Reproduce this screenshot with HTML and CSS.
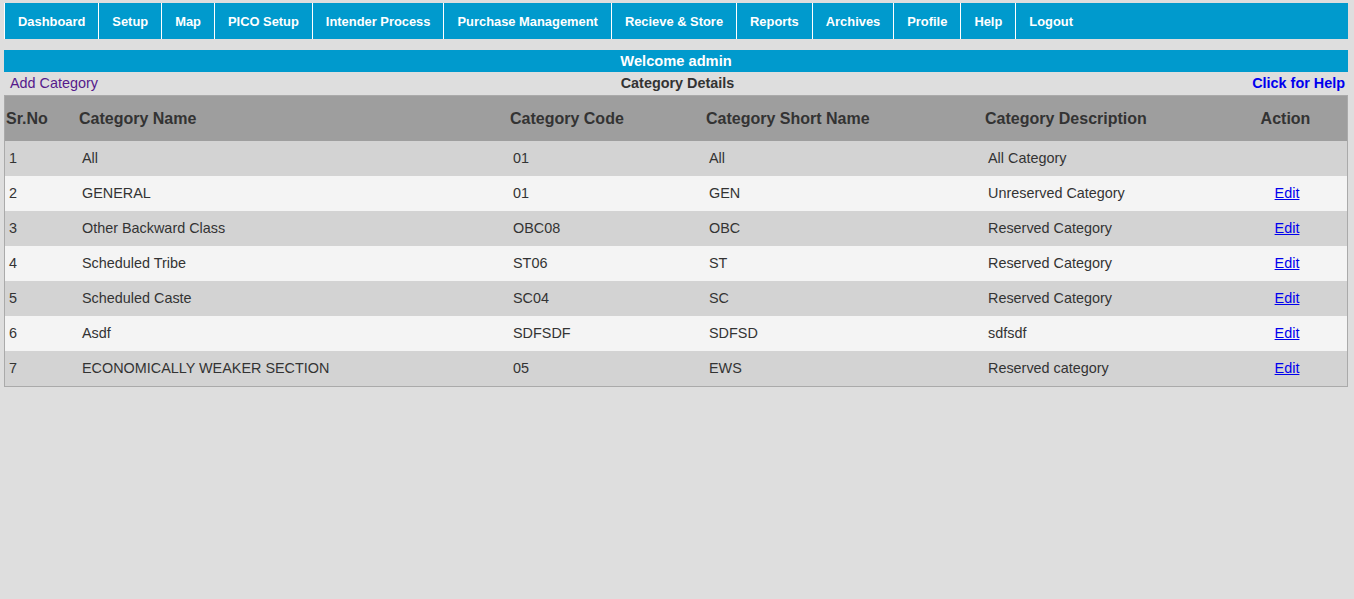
FILE: index.html
```html
<!DOCTYPE html>
<html>
<head>
<meta charset="utf-8">
<link rel="stylesheet" href="styles.css">
</head>
<body>
<div class="page">
  <nav class="menu">
    <a class="menu-item">Dashboard</a>
    <a class="menu-item">Setup</a>
    <a class="menu-item">Map</a>
    <a class="menu-item">PICO Setup</a>
    <a class="menu-item">Intender Process</a>
    <a class="menu-item">Purchase Management</a>
    <a class="menu-item">Recieve &amp; Store</a>
    <a class="menu-item">Reports</a>
    <a class="menu-item">Archives</a>
    <a class="menu-item">Profile</a>
    <a class="menu-item">Help</a>
    <a class="menu-item">Logout</a>
  </nav>
  <div class="welcome">Welcome admin</div>
  <div class="toolbar">
    <a class="add-link" href="#">Add Category</a>
    <span class="title">Category Details</span>
    <a class="help-link" href="#">Click for Help</a>
  </div>
  <table class="grid">
    <colgroup>
      <col class="c1"><col class="c2"><col class="c3"><col class="c4"><col class="c5"><col class="c6">
    </colgroup>
    <thead>
      <tr>
        <th>Sr.No</th>
        <th>Category Name</th>
        <th>Category Code</th>
        <th>Category Short Name</th>
        <th>Category Description</th>
        <th class="center">Action</th>
      </tr>
    </thead>
    <tbody>
      <tr><td>1</td><td>All</td><td>01</td><td>All</td><td>All Category</td><td class="center"></td></tr>
      <tr><td>2</td><td>GENERAL</td><td>01</td><td>GEN</td><td>Unreserved Category</td><td class="center"><a href="#" class="edit">Edit</a></td></tr>
      <tr><td>3</td><td>Other Backward Class</td><td>OBC08</td><td>OBC</td><td>Reserved Category</td><td class="center"><a href="#" class="edit">Edit</a></td></tr>
      <tr><td>4</td><td>Scheduled Tribe</td><td>ST06</td><td>ST</td><td>Reserved Category</td><td class="center"><a href="#" class="edit">Edit</a></td></tr>
      <tr><td>5</td><td>Scheduled Caste</td><td>SC04</td><td>SC</td><td>Reserved Category</td><td class="center"><a href="#" class="edit">Edit</a></td></tr>
      <tr><td>6</td><td>Asdf</td><td>SDFSDF</td><td>SDFSD</td><td>sdfsdf</td><td class="center"><a href="#" class="edit">Edit</a></td></tr>
      <tr><td>7</td><td>ECONOMICALLY WEAKER SECTION</td><td>05</td><td>EWS</td><td>Reserved category</td><td class="center"><a href="#" class="edit">Edit</a></td></tr>
    </tbody>
  </table>
</div>
</body>
</html>
```
FILE: styles.css
```css
html, body {
  margin: 0;
  padding: 0;
  background: #dedede;
  font-family: "Liberation Sans", Arial, sans-serif;
}
.page {
  padding: 3px 6px 0 4px;
}
.menu {
  display: flex;
  height: 36px;
  background: #009acd;
  border-left: 1px solid #fff;
}
.menu-item {
  display: flex;
  align-items: center;
  padding: 0 13px;
  border-right: 1px solid #fff;
  color: #fff;
  font-weight: bold;
  font-size: 12.9px;
  text-decoration: none;
}
.menu-item:last-child {
  border-right: none;
}
.welcome {
  margin-top: 11px;
  height: 22px;
  line-height: 22px;
  background: #009acd;
  color: #fff;
  font-weight: bold;
  font-size: 14.67px;
  text-align: center;
}
.toolbar {
  display: flex;
  justify-content: space-between;
  align-items: center;
  height: 23px;
  font-size: 14.4px;
  padding: 0 3px 1px 6px;
  box-sizing: border-box;
}
.add-link {
  color: #551a8b;
  text-decoration: none;
  width: 200px;
}
.title {
  font-weight: bold;
  color: #333;
}
.help-link {
  color: #0000ee;
  font-weight: bold;
  text-decoration: none;
  width: 200px;
  text-align: right;
}
.grid {
  width: 1344px;
  border-collapse: separate;
  border-spacing: 0;
  border: 1px solid #aaa;
  table-layout: fixed;
  font-size: 14.4px;
  color: #333;
}
.c1 { width: 73px; }
.c2 { width: 431px; }
.c3 { width: 196px; }
.c4 { width: 279px; }
.c5 { width: 239px; }
.c6 { width: 124px; }
.grid th {
  background: #9e9e9e;
  height: 45px;
  padding: 0 0 0 1px;
  text-align: left;
  font-size: 16px;
  font-weight: bold;
  color: #333;
}
.grid td {
  height: 34px;
  padding: 0 0 1px 4px;
}
.grid tbody tr:nth-child(odd) td { background: #d3d3d3; }
.grid tbody tr:nth-child(even) td { background: #f4f4f4; }
.grid .center { text-align: center; }
.edit {
  color: #0000ee;
  text-decoration: underline;
}
```
